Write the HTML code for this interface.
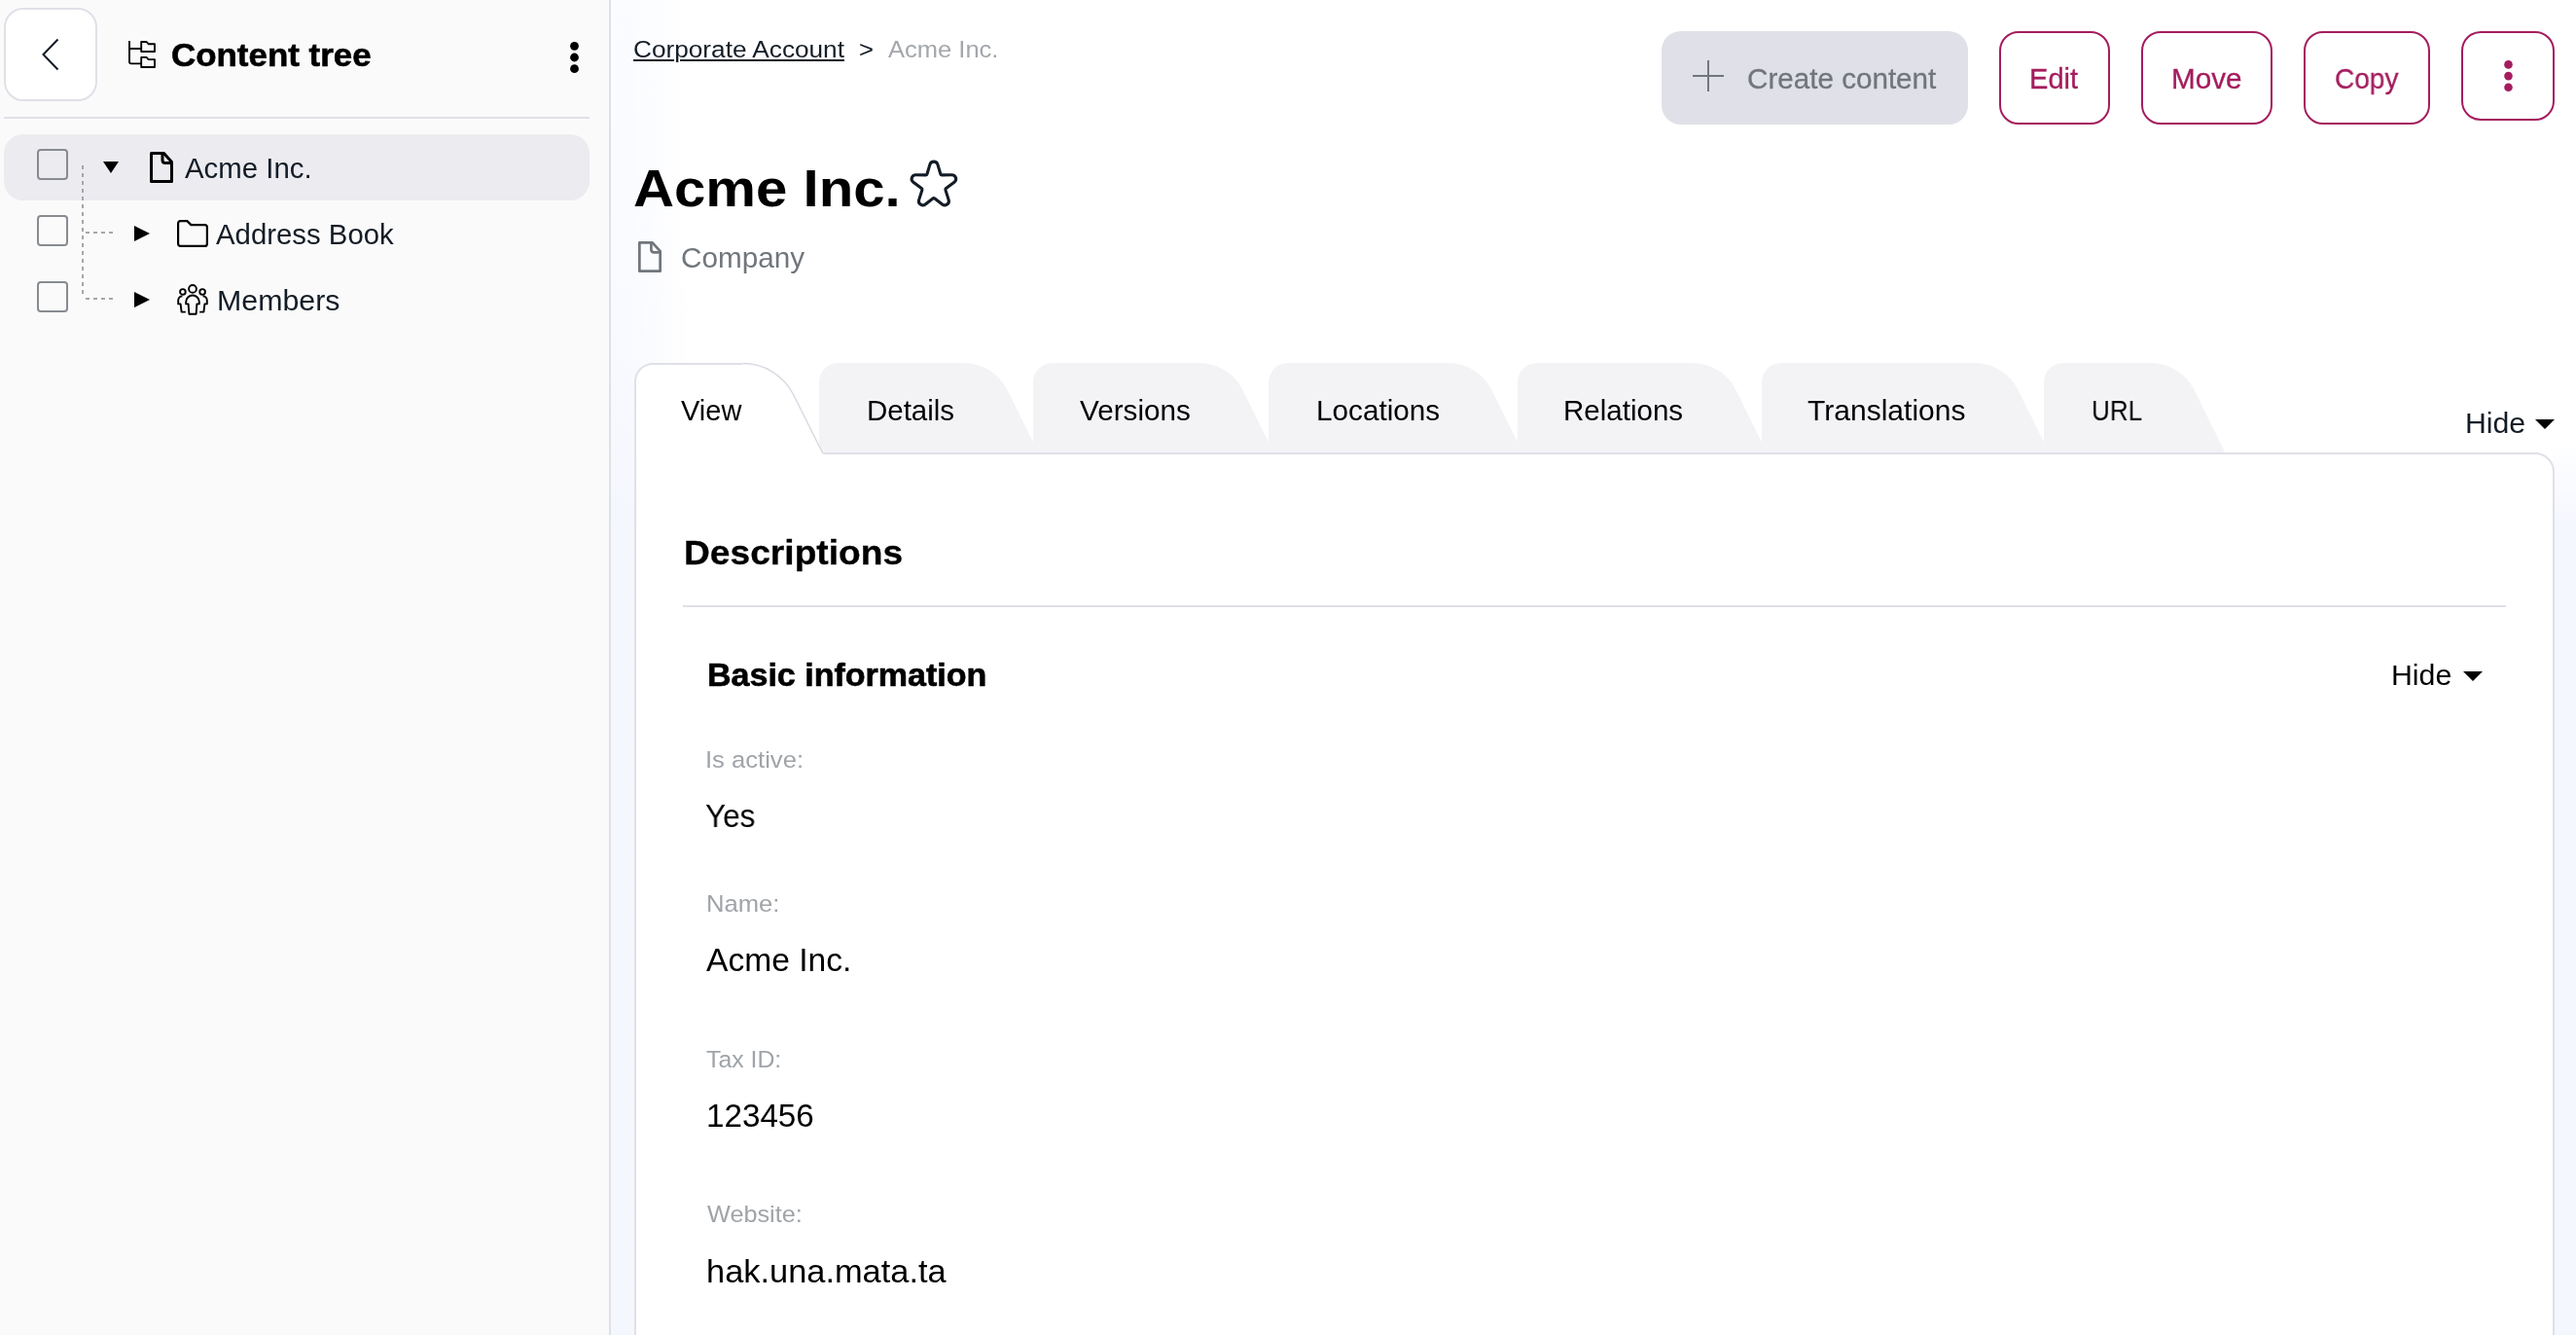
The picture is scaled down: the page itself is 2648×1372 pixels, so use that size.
<!DOCTYPE html>
<html lang="en">
<head>
<meta charset="utf-8">
<title>Acme Inc. - Corporate Account</title>
<style>
*{box-sizing:border-box}
html,body{margin:0;padding:0;width:2648px;height:1372px;overflow:hidden}
body{position:relative;background:#fdfdff;font-family:"Liberation Sans",sans-serif;color:#131c26;-webkit-font-smoothing:antialiased}
.abs,.t{position:absolute}
.t{white-space:nowrap;margin:0;padding:0;font-weight:400;transform-origin:0 0;will-change:transform;backface-visibility:hidden}
ul,li,h1,h2,h3,p,nav,ol{margin:0;padding:0;list-style:none}
button{font-family:inherit;margin:0;padding:0;border:0;background:none}
svg{position:absolute;display:block;overflow:visible}
.sidebar{position:absolute;left:0;top:0;width:628px;height:1372px;background:#fafafa;border-right:2px solid #e0e0e8}
.back{position:absolute;left:4px;top:8px;width:96px;height:96px;border:2px solid #e0e0e8;border-radius:20px;background:#fff}
.divider{position:absolute;left:4px;top:120px;width:602px;height:2px;background:#e0e0e8}
.row-active{position:absolute;left:4px;top:138px;width:602px;height:68px;border-radius:20px;background:#ebebf0}
.cb{position:absolute;left:38px;width:32px;height:32px;border:2px solid #878b90;border-radius:4px;background:transparent}
.vline{position:absolute;left:84px;top:170px;width:2px;height:134px;background:repeating-linear-gradient(to bottom,#a4a7ab 0,#a4a7ab 4px,transparent 4px,transparent 8px)}
.hline{position:absolute;left:88px;width:28px;height:2px;background:repeating-linear-gradient(to right,#a4a7ab 0,#a4a7ab 4px,transparent 4px,transparent 8px)}
.main{position:absolute;left:628px;top:0;width:2020px;height:1372px;background:linear-gradient(to right,rgba(255,255,255,0) 16px,#fff 80px),linear-gradient(to bottom,#fbfcff 0,#fafbff 220px,#f5f7fe 540px)}
.btn{position:absolute;top:32px;height:96px;border-radius:20px}
.btn-create{left:1708px;width:315px;background:#e0e0e8}
.btn-o{border:2px solid #a41d5e;background:#fff}
.panel{position:absolute;left:652px;top:465px;width:1974px;height:907px;border:2px solid #e0e0e8;border-bottom:0;border-radius:0 20px 0 0;background:#fff}
.sep{position:absolute;left:702px;top:622px;width:1874px;height:2px;background:#e0e0e8}
@media (max-width:1400px){html{zoom:.5}}
.u{text-decoration:underline;text-decoration-thickness:2px;text-underline-offset:2px}
</style>
</head>
<body>
<main class="main"></main><div class="abs" style="left:2624px;top:450px;width:24px;height:922px;background:linear-gradient(to bottom,#fff 0,#f5f7fe 90px)"></div>
<aside class="sidebar">
<button class="back" aria-label="Back"><svg style="left:-2px;top:-2px" width="96" height="96" viewBox="0 0 96 96"><polyline points="55.5,32.5 40.5,48 55.5,63.5" fill="none" stroke="#131c26" stroke-width="2" stroke-linecap="butt" stroke-linejoin="miter"/></svg></button>
<svg style="left:132px;top:42px" width="28" height="28" viewBox="0 0 28 28" fill="none" stroke="#000" stroke-width="1.85" stroke-linejoin="round"><path d="M1,0 V21.5 Q1,23.3 3,23.3 H13.2 M1,8 H13.2"/><path d="M13.2,1 H18.6 L20.6,3.2 H27 V11 H13.2 Z"/><path d="M13.2,16.9 H18.6 L20.6,19.1 H27 V27 H13.2 Z"/></svg>
<h2 class="t" style="left:176.2px;top:40.0px;font-size:33px;line-height:33px;transform:scaleX(1.0577);color:#000;font-weight:700;-webkit-text-stroke:0.6px currentColor;">Content tree</h2>
<svg style="left:584px;top:41px" width="13" height="36" viewBox="0 0 13 36" fill="#000"><circle cx="6.5" cy="6.3" r="4.4"/><circle cx="6.5" cy="18" r="4.4"/><circle cx="6.5" cy="29.7" r="4.4"/></svg>
<div class="divider"></div>
<ul>
<li><div class="row-active"></div><span class="cb" style="top:153px"></span><svg style="left:106px;top:166px" width="16" height="12" viewBox="0 0 16 12"><polygon points="0,0 16,0 8,12" fill="#000"/></svg><svg style="left:154px;top:156px" width="24" height="32" viewBox="0 0 24 32" fill="none" stroke="#000" stroke-width="3" stroke-linejoin="round"><path d="M1.5,1.5 H14.5 L22.5,10.5 V30.5 H1.5 Z"/><path d="M13,1.5 V8.5 Q13,11.5 16,11.5 H22.5"/></svg><span class="t" style="left:189.8px;top:159.0px;font-size:29px;line-height:29px;transform:scaleX(1.0132);color:#131c26;">Acme Inc.</span></li>
<li><span class="cb" style="top:221px"></span><svg style="left:138px;top:232px" width="16" height="16" viewBox="0 0 16 16"><polygon points="0,0 16,8 0,16" fill="#000"/></svg><svg style="left:182px;top:226px" width="32" height="28" viewBox="0 0 32 28" fill="none" stroke="#000" stroke-width="2.2" stroke-linejoin="round"><path d="M3.6,1.1 H10.4 L14.4,5.1 H28.4 Q30.9,5.1 30.9,7.6 V24.4 Q30.9,26.9 28.4,26.9 H3.6 Q1.1,26.9 1.1,24.4 V3.6 Q1.1,1.1 3.6,1.1 Z"/></svg><span class="t" style="left:221.6px;top:227.0px;font-size:29px;line-height:29px;transform:scaleX(1.0119);color:#131c26;">Address Book</span></li>
<li><span class="cb" style="top:289px"></span><svg style="left:138px;top:300px" width="16" height="16" viewBox="0 0 16 16"><polygon points="0,0 16,8 0,16" fill="#000"/></svg><svg style="left:182px;top:292px" width="32" height="32" viewBox="0 0 32 32" fill="none" stroke="#000" stroke-width="1.9" stroke-linejoin="round" stroke-linecap="butt"><circle cx="16" cy="4.9" r="3.9"/><circle cx="5.9" cy="7.9" r="2.8"/><circle cx="26.1" cy="7.9" r="2.8"/><path d="M9.2,20.4 V18.3 A6.8,6.8 0 0 1 22.8,18.3 V20.4 H20.4 L19.6,30.8 H12.4 L11.6,20.4 Z"/><path d="M5.4,12.2 A4.6,4.6 0 0 0 1.2,16.8 V20.4 H3.6 L4.6,28.6 H8.8"/><path d="M26.6,12.2 A4.6,4.6 0 0 1 30.8,16.8 V20.4 H28.4 L27.4,28.6 H23.2"/></svg><span class="t" style="left:222.6px;top:295.0px;font-size:29px;line-height:29px;transform:scaleX(1.0459);color:#131c26;">Members</span></li>
</ul>
<div class="vline"></div><div class="hline" style="top:238px"></div><div class="hline" style="top:306px"></div>
</aside>
<nav aria-label="breadcrumb"><a class="t u" style="left:650.8px;top:38.8px;font-size:24.5px;line-height:24.5px;transform:scaleX(1.0692);color:#131c26;">Corporate Account</a><span class="t" style="left:882.6px;top:38.8px;font-size:24.5px;line-height:24.5px;transform:scaleX(1.0475);color:#131c26;">&gt;</span><span class="t" style="left:913.2px;top:38.8px;font-size:24.5px;line-height:24.5px;transform:scaleX(1.0412);color:#a3a7ab;">Acme Inc.</span></nav>
<div><button class="btn btn-create"></button><svg style="left:1740px;top:62px" width="32" height="32" viewBox="0 0 32 32" stroke="#71767c" stroke-width="2" fill="none"><path d="M16,0 V32 M0,16 H32"/></svg><span class="t" style="left:1795.9px;top:66.8px;font-size:29px;line-height:29px;transform:scaleX(1.0213);color:#71767c;-webkit-text-stroke:0.3px currentColor;">Create content</span><button class="btn btn-o" style="left:2055px;width:114px"></button><span class="t" style="left:2086.0px;top:67.0px;font-size:29px;line-height:29px;transform:scaleX(1.0022);color:#a41d5e;-webkit-text-stroke:0.3px currentColor;">Edit</span><button class="btn btn-o" style="left:2201px;width:135px"></button><span class="t" style="left:2232.1px;top:67.0px;font-size:29px;line-height:29px;transform:scaleX(1.0238);color:#a41d5e;-webkit-text-stroke:0.3px currentColor;">Move</span><button class="btn btn-o" style="left:2368px;width:130px"></button><span class="t" style="left:2400.0px;top:67.0px;font-size:29px;line-height:29px;transform:scaleX(0.9666);color:#a41d5e;-webkit-text-stroke:0.3px currentColor;">Copy</span><button class="btn btn-o" style="left:2530px;width:96px;height:92px" aria-label="More"></button><svg style="left:2572px;top:60px" width="13" height="36" viewBox="0 0 13 36" fill="#a41d5e"><circle cx="6.5" cy="6.4" r="4.3"/><circle cx="6.5" cy="18.1" r="4.3"/><circle cx="6.5" cy="29.7" r="4.3"/></svg></div>
<h1 class="t" style="left:650.5px;top:166.8px;font-size:54.5px;line-height:54.5px;transform:scaleX(1.0672);color:#000;font-weight:700;">Acme Inc.</h1><svg style="left:930px;top:160px" width="60" height="56" viewBox="930 160 60 56" fill="none" stroke="#131c26" stroke-width="3.1" stroke-linejoin="round"><path d="M955.88,169.12 A4.2,4.2 0 0 1 963.92,169.12 L966.78,178.70 A1.6,1.6 0 0 0 968.33,179.84 L978.41,179.73 A4.2,4.2 0 0 1 980.97,187.30 L972.51,193.61 A1.6,1.6 0 0 0 971.95,195.38 L975.15,205.38 A4.2,4.2 0 0 1 968.57,209.97 L960.88,203.98 A1.6,1.6 0 0 0 958.92,203.98 L951.23,209.97 A4.2,4.2 0 0 1 944.65,205.38 L947.85,195.38 A1.6,1.6 0 0 0 947.29,193.61 L938.83,187.30 A4.2,4.2 0 0 1 941.39,179.73 L951.47,179.84 A1.6,1.6 0 0 0 953.02,178.70 Z"/></svg>
<svg style="left:656px;top:248px" width="24" height="32" viewBox="0 0 24 32" fill="none" stroke="#71767c" stroke-width="2.7" stroke-linejoin="round"><path d="M1.35,1.35 H14.6 L22.65,10.2 V30.65 H1.35 Z"/><path d="M13.4,1.35 V8.6 Q13.4,11.4 16.2,11.4 H22.65"/></svg><span class="t" style="left:700.1px;top:250.7px;font-size:29px;line-height:29px;transform:scaleX(1.0232);color:#71767c;">Company</span>
<div class="panel"></div>
<svg style="left:0;top:373px" width="2648" height="96" viewBox="0 373 2648 96" aria-hidden="true"><path d="M842.00,466 L842.00,393 A20,20 0 0 1 862.00,373 L990.67,373 A50,50 0 0 1 1035.48,400.82 L1067.74,466 Z" fill="#f3f3f6"/><path d="M1062.00,466 L1062.00,393 A20,20 0 0 1 1082.00,373 L1232.67,373 A50,50 0 0 1 1277.48,400.82 L1309.74,466 Z" fill="#f3f3f6"/><path d="M1304.00,466 L1304.00,393 A20,20 0 0 1 1324.00,373 L1488.67,373 A50,50 0 0 1 1533.48,400.82 L1565.74,466 Z" fill="#f3f3f6"/><path d="M1560.00,466 L1560.00,393 A20,20 0 0 1 1580.00,373 L1739.67,373 A50,50 0 0 1 1784.48,400.82 L1816.74,466 Z" fill="#f3f3f6"/><path d="M1811.00,466 L1811.00,393 A20,20 0 0 1 1831.00,373 L2029.67,373 A50,50 0 0 1 2074.48,400.82 L2106.74,466 Z" fill="#f3f3f6"/><path d="M2101.00,466 L2101.00,393 A20,20 0 0 1 2121.00,373 L2210.67,373 A50,50 0 0 1 2255.48,400.82 L2287.74,466 Z" fill="#f3f3f6"/><rect x="840" y="465" width="1770" height="2" fill="#e0e0e8"/><path d="M652,467 L652,391 A18,18 0 0 1 670,373 L763.46,373 A58,58 0 0 1 815.44,405.27 L846.6,467 Z" fill="#fff"/><path d="M653,467 L653,392 A18,18 0 0 1 671,374 L763.46,374" fill="none" stroke="#e0e0e8" stroke-width="2"/><path d="M763.46,373.6 A58,58 0 0 1 815.44,405.27 L845.8,466" fill="none" stroke="#d9d9e3" stroke-width="1.5"/></svg>
<ul role="tablist"><li class="t" role="tab" style="left:699.7px;top:407.7px;font-size:29px;line-height:29px;transform:scaleX(0.9988);color:#000;">View</li><li class="t" role="tab" style="left:891.3px;top:407.7px;font-size:29px;line-height:29px;transform:scaleX(1.0162);color:#000;">Details</li><li class="t" role="tab" style="left:1110.0px;top:407.7px;font-size:29px;line-height:29px;transform:scaleX(1.0235);color:#000;">Versions</li><li class="t" role="tab" style="left:1352.5px;top:407.7px;font-size:29px;line-height:29px;transform:scaleX(1.0242);color:#000;">Locations</li><li class="t" role="tab" style="left:1607.2px;top:407.7px;font-size:29px;line-height:29px;transform:scaleX(1.0181);color:#000;">Relations</li><li class="t" role="tab" style="left:1858.0px;top:407.7px;font-size:29px;line-height:29px;transform:scaleX(1.0359);color:#000;">Translations</li><li class="t" role="tab" style="left:2149.5px;top:407.7px;font-size:29px;line-height:29px;transform:scaleX(0.8982);color:#000;">URL</li></ul>
<span class="t" style="left:2533.9px;top:420.6px;font-size:29px;line-height:29px;transform:scaleX(1.0427);color:#131c26;">Hide</span><svg style="left:2606px;top:431px" width="20" height="10" viewBox="0 0 20 10"><polygon points="0,0 20,0 10,10" fill="#000"/></svg>
<h2 class="t" style="left:702.6px;top:550.1px;font-size:35px;line-height:35px;transform:scaleX(1.0618);color:#000;font-weight:700;-webkit-text-stroke:0.3px currentColor;">Descriptions</h2><div class="sep"></div>
<h3 class="t" style="left:726.8px;top:677.0px;font-size:33px;line-height:33px;transform:scaleX(1.0308);color:#000;font-weight:700;-webkit-text-stroke:0.6px currentColor;">Basic information</h3><span class="t" style="left:2457.6px;top:679.9px;font-size:29px;line-height:29px;transform:scaleX(1.0445);color:#000;">Hide</span><svg style="left:2532px;top:690px" width="20" height="10" viewBox="0 0 20 10"><polygon points="0,0 20,0 10,10" fill="#000"/></svg>
<dl style="margin:0"><dt class="t" style="left:725.0px;top:768.8px;font-size:24.5px;line-height:24.5px;transform:scaleX(1.0447);color:#a0a4a8;">Is active:</dt><dd class="t" style="left:724.8px;top:822.3px;font-size:33px;line-height:33px;transform:scaleX(0.9545);color:#000;">Yes</dd><dt class="t" style="left:726.3px;top:917.0px;font-size:24.5px;line-height:24.5px;transform:scaleX(1.0460);color:#a0a4a8;">Name:</dt><dd class="t" style="left:725.7px;top:970.1px;font-size:33px;line-height:33px;transform:scaleX(1.0175);color:#000;">Acme Inc.</dd><dt class="t" style="left:726.4px;top:1076.5px;font-size:24.5px;line-height:24.5px;transform:scaleX(1.0125);color:#a0a4a8;">Tax ID:</dt><dd class="t" style="left:726.2px;top:1129.6px;font-size:33px;line-height:33px;transform:scaleX(1.0061);color:#000;">123456</dd><dt class="t" style="left:726.7px;top:1236.3px;font-size:24.5px;line-height:24.5px;transform:scaleX(1.0312);color:#a0a4a8;">Website:</dt><dd class="t" style="left:726.0px;top:1289.7px;font-size:33px;line-height:33px;transform:scaleX(1.0422);color:#000;">hak.una.mata.ta</dd></dl>
</body>
</html>
